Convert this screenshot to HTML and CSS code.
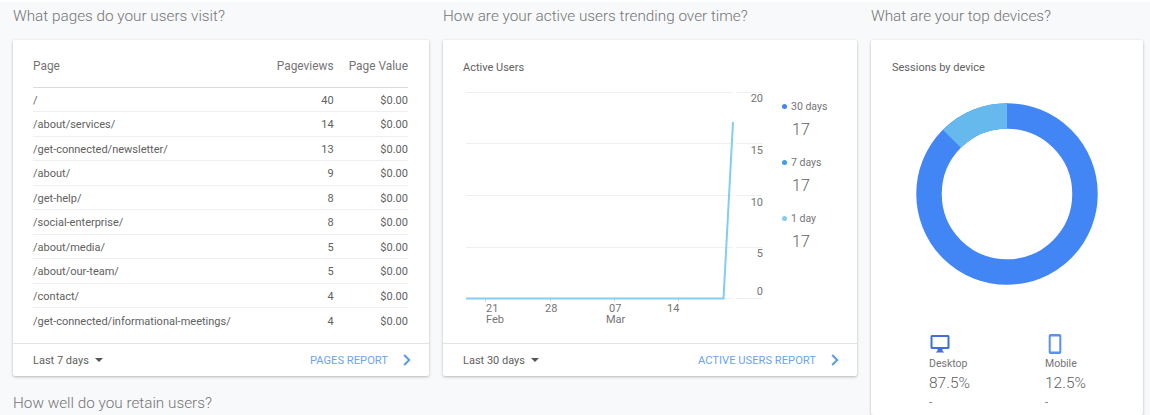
FILE: index.html
```html
<!DOCTYPE html>
<html lang="en">

<head>
    <meta charset="UTF-8">
    <meta name="viewport" content="width=device-width, initial-scale=1.0">
    <title>Audience overview</title>
    <link rel="stylesheet" href="styles.css">
</head>

<body>
    <div class="dashboard">
        <section class="column pages-column">
            <h2 class="question">What pages do your users visit?</h2>
            <div class="card pages-card">
                <div class="card-body pages-body">
                    <table class="pages-table">
                        <thead>
                            <tr>
                                <th class="page-col">Page</th>
                                <th>Pageviews</th>
                                <th>Page Value</th>
                            </tr>
                        </thead>
                        <tbody>
                            <tr><td class="page-col">/</td><td>40</td><td>$0.00</td></tr>
                            <tr><td class="page-col">/about/services/</td><td>14</td><td>$0.00</td></tr>
                            <tr><td class="page-col">/get-connected/newsletter/</td><td>13</td><td>$0.00</td></tr>
                            <tr><td class="page-col">/about/</td><td>9</td><td>$0.00</td></tr>
                            <tr><td class="page-col">/get-help/</td><td>8</td><td>$0.00</td></tr>
                            <tr><td class="page-col">/social-enterprise/</td><td>8</td><td>$0.00</td></tr>
                            <tr><td class="page-col">/about/media/</td><td>5</td><td>$0.00</td></tr>
                            <tr><td class="page-col">/about/our-team/</td><td>5</td><td>$0.00</td></tr>
                            <tr><td class="page-col">/contact/</td><td>4</td><td>$0.00</td></tr>
                            <tr><td class="page-col">/get-connected/informational-meetings/</td><td>4</td><td>$0.00</td></tr>
                        </tbody>
                    </table>
                </div>
                <div class="card-footer">
                    <span class="range">Last 7 days <i class="caret"></i></span>
                    <a class="report-link" href="#">PAGES REPORT
                        <svg class="chevron" viewBox="0 0 8 12" width="8" height="12"><path d="M1.2 1l5 5-5 5" /></svg>
                    </a>
                </div>
            </div>
            <h2 class="question retain">How well do you retain users?</h2>
        </section>

        <section class="column">
            <h2 class="question">How are your active users trending over time?</h2>
            <div class="card">
                <div class="card-body trend-body">
                    <h3 class="card-title">Active Users</h3>
                    <div class="trend-row">
                        <svg class="trend-chart" width="307" height="240" viewBox="463 88 307 240">
                            <g class="grid">
                                <path d="M466 92.5H733M736 92.5H762" />
                                <path d="M466 143.5H733M736 143.5H762" />
                                <path d="M466 195.5H733M736 195.5H762" />
                                <path d="M466 247.5H733M736 247.5H762" />
                                <path d="M466 298.5H733M736 298.5H762" />
                            </g>
                            <g class="ticks">
                                <path d="M485.5 299v3M550.5 299v3M614.5 299v3M678.5 299v3" />
                            </g>
                            <g class="axis-y">
                                <text x="763" y="102">20</text>
                                <text x="763" y="154">15</text>
                                <text x="763" y="206">10</text>
                                <text x="763" y="257">5</text>
                                <text x="763" y="295">0</text>
                            </g>
                            <g class="axis-x">
                                <text x="486" y="312">21</text>
                                <text x="486" y="323">Feb</text>
                                <text x="545" y="312">28</text>
                                <text x="609" y="312">07</text>
                                <text x="606" y="323">Mar</text>
                                <text x="667" y="312">14</text>
                            </g>
                            <polyline class="trend-line" points="466,298.5 723.5,298.5 733,122" />
                        </svg>
                        <ul class="legend">
                            <li>
                                <span class="legend-label"><i class="dot dot-30"></i>30 days</span>
                                <span class="legend-value">17</span>
                            </li>
                            <li>
                                <span class="legend-label"><i class="dot dot-7"></i>7 days</span>
                                <span class="legend-value">17</span>
                            </li>
                            <li>
                                <span class="legend-label"><i class="dot dot-1"></i>1 day</span>
                                <span class="legend-value">17</span>
                            </li>
                        </ul>
                    </div>
                </div>
                <div class="card-footer">
                    <span class="range">Last 30 days <i class="caret"></i></span>
                    <a class="report-link" href="#">ACTIVE USERS REPORT
                        <svg class="chevron" viewBox="0 0 8 12" width="8" height="12"><path d="M1.2 1l5 5-5 5" /></svg>
                    </a>
                </div>
            </div>
        </section>

        <section class="column">
            <h2 class="question">What are your top devices?</h2>
            <div class="card devices-card">
                <div class="card-body devices-body">
                    <h3 class="card-title">Sessions by device</h3>
                    <svg class="donut" width="182" height="182" viewBox="0 0 182 182">
                        <circle class="donut-base" cx="91" cy="91" r="78" />
                        <path class="donut-slice" d="M91 13A78 78 0 0 0 35.85 35.85" />
                    </svg>
                    <div class="device-stats">
                        <div class="device">
                            <svg class="device-icon desktop-icon" width="20" height="20" viewBox="0 0 20 20">
                                <path fill="#3f6fd8" d="M2 1h16a1.5 1.5 0 0 1 1.500 1.500v11a1.500 1.500 0 0 1-1.500 1.500h-5.500v2l1.500 1v.5h-8v-.5l1.500-1v-2h-5.500a1.500 1.500 0 0 1-1.500-1.500v-11a1.500 1.500 0 0 1 1.500-1.500zm.5 2v10h15v-10z" />
                            </svg>
                            <div class="device-name">Desktop</div>
                            <div class="device-share">87.5%</div>
                            <div class="device-dash">-</div>
                        </div>
                        <div class="device">
                            <svg class="device-icon" width="20" height="20" viewBox="0 0 20 20">
                                <path fill="#5b8ff0" d="M5.500 0h9a1.800 1.800 0 0 1 1.800 1.800v16.400a1.800 1.800 0 0 1-1.800 1.800h-9a1.800 1.800 0 0 1-1.800-1.800v-16.400a1.800 1.800 0 0 1 1.800-1.800zm.2 2.500v15h8.600v-15z" />
                            </svg>
                            <div class="device-name">Mobile</div>
                            <div class="device-share">12.5%</div>
                            <div class="device-dash">-</div>
                        </div>
                    </div>
                </div>
            </div>
        </section>
    </div>
</body>

</html>
```

FILE: styles.css
```css
* {
    box-sizing: border-box;
}

html,
body {
    height: 415px;
    margin: 0;
    overflow: hidden;
}

body {
    background-color: #f8f9fb;
    border-top: 2px solid #fff;
    font-family: 'Roboto', sans-serif;
    color: #616161;
}

.dashboard {
    display: grid;
    grid-template-columns: 416px 414px 272px;
    column-gap: 14px;
    padding-left: 13px;
}

.question {
    margin: 0;
    height: 38px;
    padding-top: 5px;
    font-size: 15.300px;
    line-height: 18px;
    font-weight: 300;
    color: #757575;
}

.question.retain {
    height: auto;
    padding-top: 18px;
}

.card {
    background-color: #fff;
    border-radius: 2px;
    box-shadow: 0 1px 3px rgba(0, 0, 0, 0.28);
}

.card-body {
    height: 303px;
    padding: 21px 20px 20px;
}

.card-title {
    margin: 0;
    font-size: 11px;
    line-height: 14px;
    font-weight: 400;
    color: #616161;
}

.card-footer {
    display: flex;
    justify-content: space-between;
    align-items: center;
    height: 33px;
    padding: 0 18px 0 20px;
    border-top: 1px solid #e3e3e3;
    font-size: 11px;
}

.range {
    display: flex;
    align-items: center;
    gap: 6px;
    color: #616161;
}

.caret {
    width: 0;
    height: 0;
    border-left: 4px solid transparent;
    border-right: 4px solid transparent;
    border-top: 4px solid #555;
}

.report-link {
    display: flex;
    align-items: center;
    gap: 15px;
    font-size: 11.200px;
    color: #6aa5ec;
    text-decoration: none;
}

.chevron path {
    fill: none;
    stroke: #5a9be8;
    stroke-width: 2;
}

/* pages table */
.pages-body {
    padding: 14px 21px 0 20px;
}

.pages-table {
    width: 100%;
    border-collapse: collapse;
    font-size: 11px;
}

.pages-table th {
    height: 33px;
    padding: 0 0 8px 15px;
    font-size: 11.900px;
    font-weight: 400;
    text-align: right;
    white-space: nowrap;
    color: #757575;
    border-bottom: 1px solid #dcdcdc;
}

.pages-table td {
    height: 24.500px;
    padding: 2px 0 0 15px;
    text-align: right;
    color: #616161;
    border-bottom: 1px solid #efefef;
}

.pages-table tbody tr:last-child td {
    border-bottom: 0;
}

.pages-table .page-col {
    width: 100%;
    padding-left: 0;
    text-align: left;
}

/* active users */
.trend-row {
    display: flex;
    margin-top: 13px;
}

.trend-chart {
    flex: none;
    display: block;
}

.grid path {
    fill: none;
    stroke: #efefef;
}

.ticks path {
    fill: none;
    stroke: #d8d8d8;
}

.axis-y text {
    font-size: 11px;
    fill: #757575;
    text-anchor: end;
}

.axis-x text {
    font-size: 11px;
    fill: #757575;
}

.trend-line {
    fill: none;
    stroke: #82cdf1;
    stroke-width: 2;
}

.legend {
    margin: 0 0 0 12px;
    padding: 11px 0 0 0;
    list-style: none;
}

.legend li {
    height: 56px;
}

.legend-label {
    display: flex;
    align-items: center;
    gap: 4px;
    height: 14px;
    font-size: 10.500px;
    color: #757575;
}

.legend-value {
    display: block;
    margin: 8px 0 0 10px;
    font-size: 16px;
    line-height: 18px;
    font-weight: 300;
    color: #616161;
}

.dot {
    width: 5px;
    height: 5px;
    border-radius: 50%;
}

.dot-30 {
    background-color: #4285f4;
}

.dot-7 {
    background-color: #3d9df0;
}

.dot-1 {
    background-color: #82cdf1;
}

/* devices */
.devices-card {
    height: 375px;
}

.devices-body {
    height: 100%;
    padding-left: 21px;
}

.donut {
    display: block;
    margin: 28px 0 0 24px;
}

.donut-base {
    fill: none;
    stroke: #4285f4;
    stroke-width: 25.500;
}

.donut-slice {
    fill: none;
    stroke: #66b9ec;
    stroke-width: 25.500;
}

.device-stats {
    display: grid;
    grid-template-columns: 116px 1fr;
    margin: 49px 0 0 37px;
}

.device-icon {
    display: block;
}

.desktop-icon {
    margin-left: 1px;
}

.device-name {
    margin-top: 3px;
    font-size: 10.500px;
    line-height: 14px;
    color: #757575;
}

.device-share {
    margin-top: 3px;
    font-size: 15.500px;
    line-height: 18px;
    font-weight: 300;
    color: #616161;
}

.device-dash {
    margin-top: 4px;
    font-size: 11px;
    line-height: 14px;
    color: #757575;
}
```
